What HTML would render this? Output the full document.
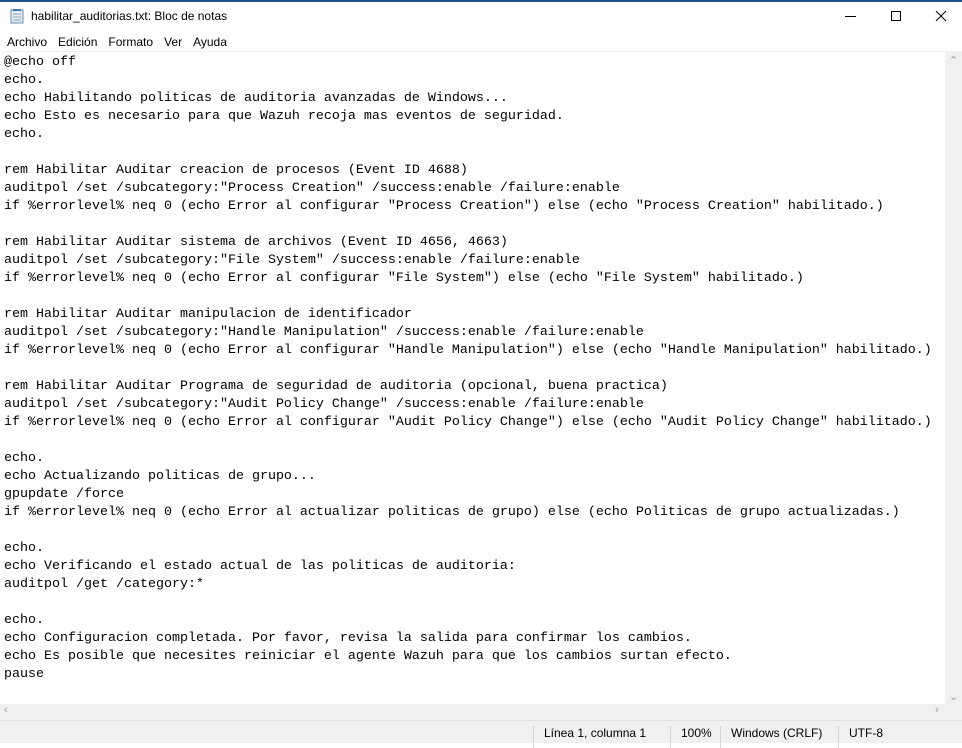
<!DOCTYPE html><html><head><style>
body{margin:0;width:962px;height:742px;background:#fff;position:relative;overflow:hidden;font-family:"Segoe UI","Liberation Sans",sans-serif}
.top{position:absolute;left:0;top:0;width:962px;height:2px;background:#1f4e8c}
.title{position:absolute;left:31px;top:9px;font-size:12px;color:#000}
.menu{position:absolute;top:35px;left:7px;font-size:12px;color:#000}
.menu span{margin-right:11px}
.ed{position:absolute;left:0;top:51px;width:945px;height:653px;border-top:1px solid #f0f0f0}
pre{margin:0;position:absolute;left:4px;top:2px;font-family:"Liberation Mono",monospace;font-size:13.33px;line-height:18px;color:#000}
.vs{position:absolute;left:945px;top:51px;width:17px;height:653px;background:#f0f0f0}
.hs{position:absolute;left:0;top:704px;width:945px;height:16px;background:#f0f0f0}
.corner{position:absolute;left:945px;top:704px;width:17px;height:16px;background:#f0f0f0}
.sb{position:absolute;left:0;top:720px;width:962px;height:22px;background:#f0f0f0;border-top:1px solid #e3e3e3;font-size:12px}
.sb div{position:absolute;top:5px}
.sep{position:absolute;top:0;width:1px;height:22px;background:#d7d7d7}
.ar{position:absolute;color:#a0a0a0;font-size:11px}
</style></head><body>
<div class="top"></div>
<svg style="position:absolute;left:9px;top:8px" width="16" height="16"><rect x="2" y="2" width="12" height="13" fill="#dfe9f3" stroke="#6b8bb0"/><line x1="4" y1="2" x2="12" y2="2" stroke="#4a7ab0" stroke-width="2"/><line x1="4" y1="6" x2="12" y2="6" stroke="#9ab"/><line x1="4" y1="9" x2="12" y2="9" stroke="#9ab"/><line x1="4" y1="12" x2="12" y2="12" stroke="#9ab"/></svg>
<div class="title">habilitar_auditorias.txt: Bloc de notas</div>
<svg style="position:absolute;left:843px;top:10px" width="110" height="14"><line x1="2" y1="6.5" x2="13" y2="6.5" stroke="#000"/><rect x="48.5" y="1.5" width="9" height="9" fill="none" stroke="#000"/><path d="M93 1L103 11M103 1L93 11" stroke="#000"/></svg>
<div class="menu"><span>Archivo</span><span>Edición</span><span>Formato</span><span>Ver</span><span>Ayuda</span></div>
<div class="ed"><pre>@echo off
echo.
echo Habilitando politicas de auditoria avanzadas de Windows...
echo Esto es necesario para que Wazuh recoja mas eventos de seguridad.
echo.

rem Habilitar Auditar creacion de procesos (Event ID 4688)
auditpol /set /subcategory:"Process Creation" /success:enable /failure:enable
if %errorlevel% neq 0 (echo Error al configurar "Process Creation") else (echo "Process Creation" habilitado.)

rem Habilitar Auditar sistema de archivos (Event ID 4656, 4663)
auditpol /set /subcategory:"File System" /success:enable /failure:enable
if %errorlevel% neq 0 (echo Error al configurar "File System") else (echo "File System" habilitado.)

rem Habilitar Auditar manipulacion de identificador
auditpol /set /subcategory:"Handle Manipulation" /success:enable /failure:enable
if %errorlevel% neq 0 (echo Error al configurar "Handle Manipulation") else (echo "Handle Manipulation" habilitado.)

rem Habilitar Auditar Programa de seguridad de auditoria (opcional, buena practica)
auditpol /set /subcategory:"Audit Policy Change" /success:enable /failure:enable
if %errorlevel% neq 0 (echo Error al configurar "Audit Policy Change") else (echo "Audit Policy Change" habilitado.)

echo.
echo Actualizando politicas de grupo...
gpupdate /force
if %errorlevel% neq 0 (echo Error al actualizar politicas de grupo) else (echo Politicas de grupo actualizadas.)

echo.
echo Verificando el estado actual de las politicas de auditoria:
auditpol /get /category:*

echo.
echo Configuracion completada. Por favor, revisa la salida para confirmar los cambios.
echo Es posible que necesites reiniciar el agente Wazuh para que los cambios surtan efecto.
pause</pre></div>
<div class="vs"></div><div class="hs"></div><div class="corner"></div>
<div class="ar" style="left:949px;top:54px">&#8963;</div>
<div class="ar" style="left:949px;top:690px">&#8964;</div>
<div class="ar" style="left:4px;top:704px">&lsaquo;</div>
<div class="ar" style="left:935px;top:704px">&rsaquo;</div>
<div class="sb">
<div class="sep" style="left:533px"></div><div style="left:544px">Línea 1, columna 1</div>
<div class="sep" style="left:670px"></div><div style="left:681px">100%</div>
<div class="sep" style="left:720px"></div><div style="left:731px">Windows (CRLF)</div>
<div class="sep" style="left:838px"></div><div style="left:849px">UTF-8</div>
</div>
</body></html>
